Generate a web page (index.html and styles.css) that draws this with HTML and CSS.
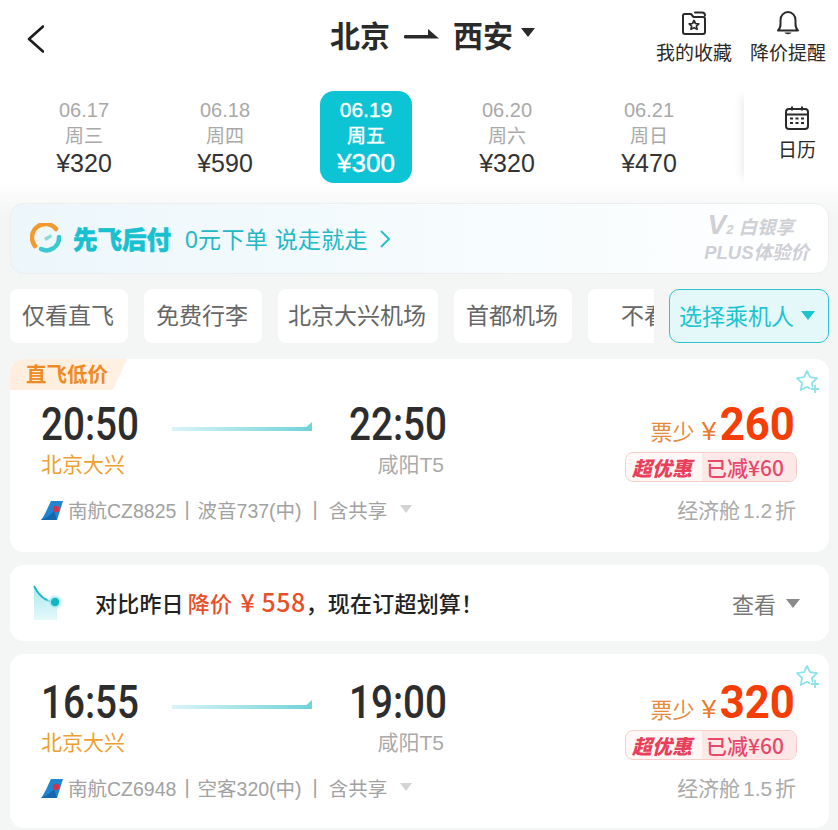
FILE: index.html
```html
<!DOCTYPE html>
<html lang="zh-CN">
<head>
  <meta charset="UTF-8">
  <title>北京 - 西安</title>
  <link rel="stylesheet" href="styles.css">
</head>
<body>
  <svg class="sprite" width="0" height="0">
    <defs>
      <symbol id="tail" viewBox="0 0 22 20">
        <path d="M10 0H22L16 19H0C4 14 7 6 10 0Z" fill="#1f86cf"/>
        <path d="M0 19C5 17 10 14 13 10L16 19Z" fill="#1668ad"/>
        <circle cx="15" cy="8" r="3.200" fill="#d8324a"/>
      </symbol>
      <symbol id="star-plus" viewBox="0 0 24 24">
        <path d="M16.500 17.500l-.5-3.500 5-4.800-7-1L11 2 8 8.200l-7 1 5 4.800-1.200 7L11 17.800l2.500 1.300" fill="none" stroke="#8ce4ea" stroke-width="1.800" stroke-linejoin="round" stroke-linecap="round"/>
        <path d="M19 16.500v7M15.500 20h7" stroke="#8ce4ea" stroke-width="1.800" stroke-linecap="round"/>
      </symbol>
      <linearGradient id="trend" x1="0" y1="0" x2="0" y2="1">
        <stop offset="0" stop-color="#a6eaef"/>
        <stop offset="1" stop-color="#e6f9fb"/>
      </linearGradient>
      <radialGradient id="glow">
        <stop offset="0" stop-color="#14b4c2"/>
        <stop offset=".4" stop-color="#14b4c2"/>
        <stop offset=".5" stop-color="#9be8ee"/>
        <stop offset="1" stop-color="#ffffff" stop-opacity="0"/>
      </radialGradient>
    </defs>
  </svg>

  <div class="page">
    <header class="topbar">
      <svg class="back" width="17" height="28" viewBox="0 0 17 28"><path d="M16 1.500L2 14l14 12.500" fill="none" stroke="#1c1c1c" stroke-width="2.600" stroke-linecap="round" stroke-linejoin="round"/></svg>
      <div class="route-title">
        <span>北京</span>
        <svg class="route-arrow" width="35" height="10" viewBox="0 0 35 10"><path d="M1.500 6H24V0L35 9.500H1.500a1.700 1.700 0 0 1 0-3.500z" fill="#2a2a2a"/></svg>
        <span>西安</span>
        <i class="caret"></i>
      </div>
      <div class="top-actions">
        <div class="top-action">
          <svg width="26" height="26" viewBox="0 0 26 26"><path d="M2 8V5.500C2 4.500 2.800 4 3.500 4H10l2.500 3H22c1.200 0 2 .8 2 2v13c0 1-.8 2-2 2H4c-1.200 0-2-1-2-2z M14 2.500h7c1.500 0 3 1 3 3" fill="none" stroke="#2a2a2a" stroke-width="2" stroke-linecap="round" stroke-linejoin="round"/><path d="M13 10.500l1.500 3 3.300.4-2.400 2.200.7 3.200-3.100-1.600-3 1.600.6-3.200-2.400-2.200 3.300-.4z" fill="none" stroke="#2a2a2a" stroke-width="1.700" stroke-linejoin="round"/></svg>
          <span>我的收藏</span>
        </div>
        <div class="top-action">
          <svg width="26" height="26" viewBox="0 0 26 26"><path d="M3 20.500c2-1.500 2.500-3 2.500-6.500V10c0-4.500 3.300-8 7.500-8s7.500 3.500 7.500 8v4c0 3.500.5 5 2.500 6.500z" fill="none" stroke="#2a2a2a" stroke-width="2" stroke-linejoin="round"/><path d="M9.500 22.500c1 2.300 6 2.300 7 0z" fill="#2a2a2a"/></svg>
          <span>降价提醒</span>
        </div>
      </div>
    </header>

    <section class="dates">
      <div class="date-item"><div class="date-day">06.17</div><div class="date-week">周三</div><div class="date-price">¥320</div></div>
      <div class="date-item"><div class="date-day">06.18</div><div class="date-week">周四</div><div class="date-price">¥590</div></div>
      <div class="date-item active"><div class="date-day">06.19</div><div class="date-week">周五</div><div class="date-price">¥300</div></div>
      <div class="date-item"><div class="date-day">06.20</div><div class="date-week">周六</div><div class="date-price">¥320</div></div>
      <div class="date-item"><div class="date-day">06.21</div><div class="date-week">周日</div><div class="date-price">¥470</div></div>
      <div class="calendar">
        <svg width="24" height="24" viewBox="0 0 24 24"><rect x="1" y="3" width="22" height="20" rx="3" fill="none" stroke="#2a2a2a" stroke-width="2"/><path d="M1 8.500h22M7 0.500v4M17 0.500v4" stroke="#2a2a2a" stroke-width="2"/><path d="M5 12.500h3M10.500 12.500h3M16 12.500h3M5 17h3M10.500 17h3M16 17h3" stroke="#2a2a2a" stroke-width="2"/></svg>
        <span>日历</span>
      </div>
    </section>

    <section class="promo">
      <svg class="promo-logo" width="34" height="32" viewBox="0 0 34 32">
        <path d="M5 23A12.500 12.500 0 0 1 26 6" fill="none" stroke="#f29a2e" stroke-width="4.500" stroke-linecap="round"/>
        <path d="M11 26A12.500 12.500 0 0 0 29 14" fill="none" stroke="#3cc8d0" stroke-width="4.500" stroke-linecap="round"/>
        <path d="M14 15l7-4 1 3-6 4z" fill="#8bdcd8"/>
      </svg>
      <b class="promo-name">先飞后付</b>
      <span class="promo-text">0元下单 说走就走</span>
      <svg width="12" height="20" viewBox="0 0 12 20"><path d="M2 2l8 8-8 8" fill="none" stroke="#29bfcc" stroke-width="2"/></svg>
      <div class="promo-vip">
        <div class="vip-line"><b class="vip-mark">V</b><small>2</small> 白银享</div>
        <div>PLUS体验价</div>
      </div>
    </section>

    <section class="filters">
      <div class="chip">仅看直飞</div>
      <div class="chip">免费行李</div>
      <div class="chip chip-wide">北京大兴机场</div>
      <div class="chip">首都机场</div>
      <div class="chip chip-long">不看</div>
      <div class="passenger-wrap">
        <div class="passenger">选择乘机人<i class="caret caret-teal"></i></div>
      </div>
    </section>

    <article class="flight first">
      <div class="flight-badge">直飞低价</div>
      <svg class="fav" width="24" height="24"><use href="#star-plus"/></svg>
      <div class="flight-left">
        <div class="times">
          <div class="time-col">
            <div class="time">20:50</div>
            <div class="airport hot">北京大兴</div>
          </div>
          <div class="route-line"></div>
          <div class="time-col arrive">
            <div class="time">22:50</div>
            <div class="airport">咸阳T5</div>
          </div>
        </div>
        <div class="flight-meta">
          <svg width="22" height="20"><use href="#tail"/></svg>
          <span>南航CZ8825</span><em>|</em><span>波音737(中)</span><em class="sep-wide">|</em><span>含共享</span>
          <i class="caret caret-grey"></i>
        </div>
      </div>
      <div class="flight-right">
        <div class="price-line"><span class="few">票少</span><span class="yen">¥</span><span class="price">260</span></div>
        <div class="deal"><b>超优惠</b><span>已减¥60</span></div>
        <div class="cabin">经济舱 1.2 折</div>
      </div>
    </article>

    <section class="notice">
      <svg width="32" height="36" viewBox="0 0 32 36">
        <path d="M1 2c4 8 10 14 20 15l3 3v15H1z" fill="url(#trend)"/>
        <path d="M1 1c4 8 10 15 20 16" fill="none" stroke="#1fb9c6" stroke-width="1.800"/>
        <circle cx="22" cy="17" r="9" fill="url(#glow)"/>
      </svg>
      <p class="notice-text">对比昨日<span class="drop">降价 <span class="drop-num">¥ 558</span></span>，现在订超划算！</p>
      <div class="notice-more">查看<i class="caret caret-dim"></i></div>
    </section>

    <article class="flight">
      <svg class="fav" width="24" height="24"><use href="#star-plus"/></svg>
      <div class="flight-left">
        <div class="times">
          <div class="time-col">
            <div class="time">16:55</div>
            <div class="airport hot">北京大兴</div>
          </div>
          <div class="route-line"></div>
          <div class="time-col arrive">
            <div class="time">19:00</div>
            <div class="airport">咸阳T5</div>
          </div>
        </div>
        <div class="flight-meta">
          <svg width="22" height="20"><use href="#tail"/></svg>
          <span>南航CZ6948</span><em>|</em><span>空客320(中)</span><em class="sep-wide">|</em><span>含共享</span>
          <i class="caret caret-grey"></i>
        </div>
      </div>
      <div class="flight-right">
        <div class="price-line"><span class="few">票少</span><span class="yen">¥</span><span class="price">320</span></div>
        <div class="deal"><b>超优惠</b><span>已减¥60</span></div>
        <div class="cabin">经济舱 1.5 折</div>
      </div>
    </article>
  </div>
</body>
</html>
```
FILE: styles.css
```css
* { box-sizing: border-box; }
html, body { margin: 0; }
body {
  width: 838px;
  height: 830px;
  overflow: hidden;
  font-family: "Liberation Sans", "Noto Sans CJK SC", sans-serif;
  color: #2a2a2a;
}
.sprite { position: absolute; }
.page {
  height: 830px;
  background: linear-gradient(#fff 0, #fff 180px, #f4f5f5 215px);
}
i { display: block; font-style: normal; }

.caret {
  width: 0;
  height: 0;
  border-left: 7px solid transparent;
  border-right: 7px solid transparent;
  border-top: 9px solid #2a2a2a;
}
.caret-teal { border-top-color: #1cc4d0; }
.caret-grey { border-left-width: 6px; border-right-width: 6px; border-top: 8px solid #d4d4d4; margin-left: 13px; }
.caret-dim { border-top-color: #8a8a8a; margin-left: 10px; }

/* header */
.topbar {
  height: 91px;
  display: flex;
  align-items: flex-start;
  padding: 0 12px 0 27px;
}
.back { margin-top: 25px; }
.route-title {
  margin-left: 286px;
  height: 68px;
  display: flex;
  align-items: center;
  gap: 14px;
  font-size: 30px;
  font-weight: 700;
  color: #2a2a2a;
}
.route-title .caret { margin: -4px 0 0 -6px; }
.top-actions { margin-left: auto; display: flex; gap: 18px; }
.top-action {
  display: flex;
  flex-direction: column;
  align-items: center;
  padding-top: 10px;
  font-size: 19px;
  line-height: 30px;
  color: #2a2a2a;
}
.top-action svg { display: block; }
.top-action span { margin-top: 3px; }

/* date strip */
.dates {
  height: 92px;
  display: flex;
  gap: 49px;
  padding-left: 38px;
}
.date-item {
  width: 92px;
  height: 92px;
  padding-top: 6px;
  border-radius: 14px;
  text-align: center;
}
.date-item:nth-child(5) { margin-left: 1px; }
.date-day { font-size: 20px; line-height: 26px; color: #a9a9a9; }
.date-week { font-size: 19px; line-height: 26px; padding-top: 1px; color: #a9a9a9; }
.date-price { font-size: 25px; line-height: 27px; color: #333; }
.date-item.active { background: #0cc4d4; }
.date-item.active div { color: #fff; -webkit-text-stroke: .4px #fff; }
.date-item.active .date-day { font-size: 21px; }
.date-item.active .date-price { font-size: 26px; }
.calendar {
  margin-left: auto;
  width: 94px;
  height: 92px;
  padding: 15px 0 0 12px;
  display: flex;
  flex-direction: column;
  align-items: center;
  background: #fff;
  box-shadow: -7px 0 10px -6px rgba(0, 0, 0, .1);
  clip-path: inset(0 0 0 -20px);
  font-size: 19px;
  line-height: 30px;
}
.calendar span { margin-top: 6px; }

/* promo banner */
.promo {
  margin: 20px 9px 0 10px;
  height: 71px;
  display: flex;
  align-items: center;
  padding-left: 19px;
  background: linear-gradient(90deg, #edf7fb, #f5fbfd 50%, #fff);
  border: 1px solid #eceeef;
  border-radius: 14px;
}
.promo-name {
  margin-left: 9px;
  font-size: 24.500px;
  font-weight: 900;
  color: #17c1cf;
  -webkit-text-stroke: .5px #17c1cf;
}
.promo-text {
  margin: -2px 11px 0 14px;
  font-size: 23px;
  letter-spacing: .3px;
  color: #22b8c6;
}
.promo-vip {
  margin-left: auto;
  padding-right: 19px;
  text-align: right;
  font-size: 18.500px;
  line-height: 23px;
  font-style: italic;
  font-weight: 700;
  color: #cfcfd6;
}
.vip-line { padding-right: 15px; }
.vip-mark { font-size: 28px; line-height: 23px; }
.promo-vip small { font-size: 13px; }

/* filter chips */
.filters {
  position: relative;
  margin-top: 15px;
  height: 54px;
  display: flex;
  gap: 16px;
  padding-left: 10px;
  overflow: hidden;
}
.chip {
  flex: none;
  height: 54px;
  padding: 0 14px 0 12px;
  background: #fff;
  border-radius: 8px;
  font-size: 23px;
  line-height: 55px;
  color: #666;
}
.chip-wide { padding: 0 12px 0 10px; }
.chip-long { padding: 0 60px 0 33px; }
.passenger-wrap {
  position: absolute;
  top: 0;
  right: 0;
  width: 184px;
  height: 54px;
  padding: 0 9px 0 15px;
  background: #f4f5f5;
}
.passenger {
  height: 54px;
  display: flex;
  align-items: center;
  padding: 0 0 2px 9px;
  gap: 7px;
  background: #e4f8fa;
  border: 1.500px solid #2bc4cf;
  border-radius: 10px;
  font-size: 23px;
  color: #1cc4d0;
}

/* flight cards */
.flight {
  position: relative;
  margin: 13px 9px 0 10px;
  height: 174px;
  display: flex;
  justify-content: space-between;
  padding: 25px 32px 0 31px;
  background: #fff;
  border-radius: 14px;
}
.flight.first { margin-top: 16px; height: 193px; padding-top: 42px; }
.flight-badge {
  position: absolute;
  top: 0;
  left: 0;
  width: 117px;
  height: 31px;
  padding-left: 16px;
  background: linear-gradient(90deg, #ffeedd, #fff1e2);
  border-top-left-radius: 14px;
  clip-path: polygon(0 0, 100% 0, 88% 100%, 0 100%);
  font-size: 20.500px;
  line-height: 31px;
  font-weight: 700;
  color: #f08a24;
}
.fav { position: absolute; top: 10px; right: 9px; }
.times { display: grid; grid-template-columns: 131px 140px 135px; }
.time {
  font-family: "Roboto", sans-serif;
  font-size: 46px;
  line-height: 46px;
  font-weight: 500;
  color: #2d2d2d;
  transform: scaleX(.84);
  transform-origin: left center;
}
.arrive .time { transform-origin: right center; }
.airport { margin-top: 4px; font-size: 21px; line-height: 28px; color: #aaa; }
.airport.hot { color: #eda030; }
.arrive { text-align: right; }
.arrive .airport { padding-right: 3px; }
.route-line {
  position: relative;
  height: 4px;
  margin-top: 26px;
  background: linear-gradient(90deg, #d9f4f6, #6fd3da);
}
.route-line::after {
  content: "";
  position: absolute;
  right: 0;
  bottom: 0;
  border-left: 10px solid transparent;
  border-bottom: 9px solid #6fd3da;
}
.flight-meta {
  margin-top: 16px;
  height: 28px;
  display: flex;
  align-items: center;
  font-size: 19.500px;
  color: #a2a2a2;
}
.flight-meta svg { margin-top: 3px; }
.flight-meta span:first-of-type { margin-left: 5px; }
.flight-meta em { margin: 0 8px; font-style: normal; font-size: 20px; font-weight: 300; }
.flight-meta em.sep-wide { margin: 0 11px; }
.flight-right { display: flex; flex-direction: column; align-items: flex-end; }
.price-line { display: flex; align-items: baseline; height: 46px; line-height: 46px; margin-right: 2px; }
.few { font-size: 22px; color: #e68a3c; }
.yen { margin: 0 2px 0 7px; font-size: 26px; color: #ea7a30; }
.price {
  font-family: "Roboto", sans-serif;
  font-size: 47px;
  font-weight: 700;
  color: #f43e06;
  transform: scaleX(.93);
  transform-origin: right center;
  margin-left: -4px;
}
.deal {
  margin-top: 5px;
  width: 172px;
  height: 30px;
  display: flex;
  align-items: center;
  background: #fff8f7;
  border: 1px solid #f8cfc8;
  border-radius: 8px;
  overflow: hidden;
  font-size: 20px;
  color: #e6486a;
}
.deal b { width: 76px; padding-left: 6px; font-style: italic; font-weight: 900; color: #e8405a; }
.deal span {
  flex: 1;
  height: 100%;
  line-height: 28px;
  padding-left: 4px;
  background: #fde8e8;
  font-family: "Noto Sans CJK SC", sans-serif;
  font-size: 21px;
  font-weight: 500;
}
.cabin { margin: 15px 1px 0 0; font-size: 21px; line-height: 28px; color: #aaa; word-spacing: -3px; }

/* price drop notice */
.notice {
  margin: 13px 9px 0 10px;
  height: 76px;
  display: flex;
  align-items: center;
  padding: 0 29px 0 23px;
  background: #fff;
  border-radius: 14px;
}
.notice-text {
  margin: -5px 0 0 30px;
  font-size: 22px;
  color: #222;
  font-weight: 500;
  letter-spacing: .2px;
}
.drop { color: #e8502a; margin-left: 4px; }
.drop-num {
  margin-left: 2px;
  font-family: "Noto Sans CJK SC", sans-serif;
  font-size: 25px;
  font-weight: 500;
  letter-spacing: .5px;
}
.notice-more {
  margin-left: auto;
  display: flex;
  align-items: center;
  font-size: 22px;
  color: #777;
}
```
